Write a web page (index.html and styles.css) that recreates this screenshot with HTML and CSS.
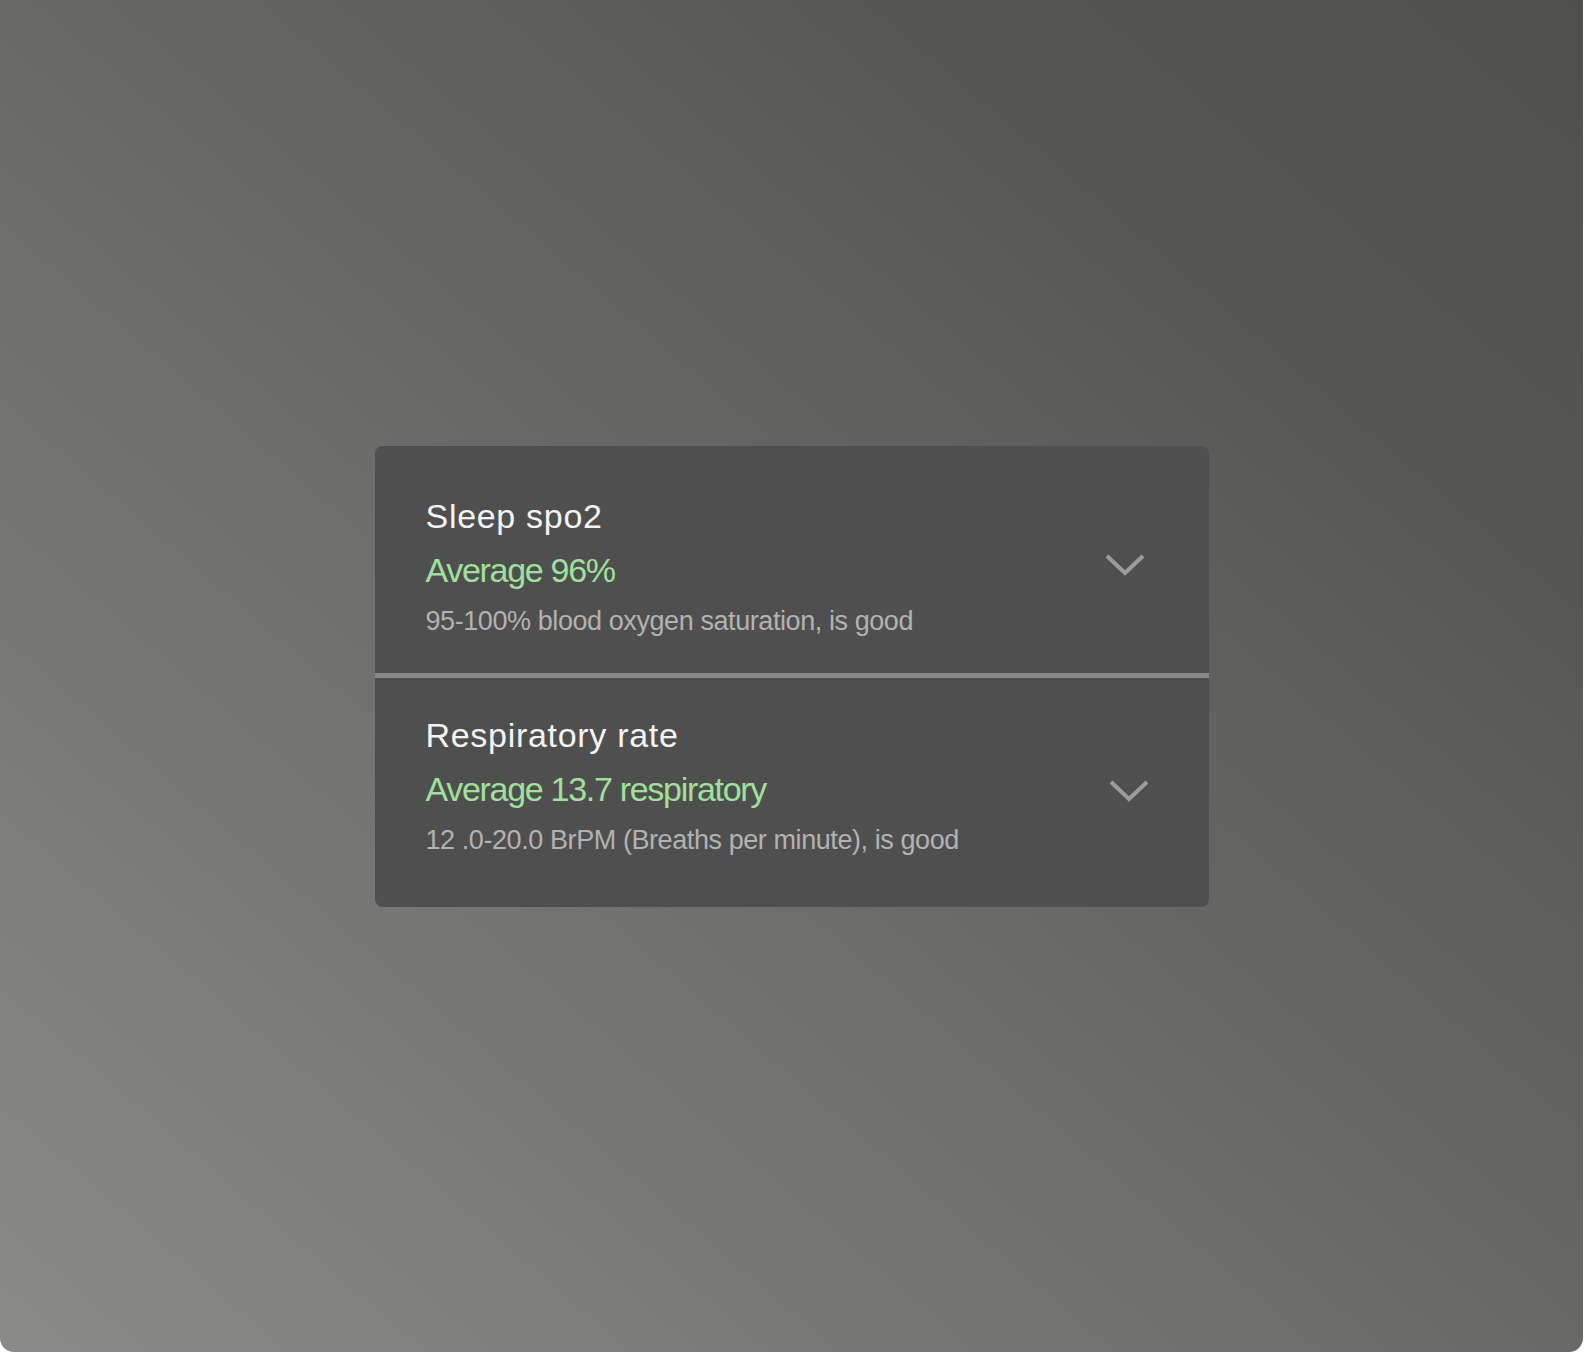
FILE: index.html
```html
<!DOCTYPE html>
<html lang="en">
<head>
    <meta charset="utf-8">
    <title>Sleep stats</title>
    <link rel="stylesheet" href="styles.css">
</head>
<body>
    <div class="frame">
        <div class="stats-card">
            <div class="stat-row stat-row-first">
                <div class="stat-text">
                    <div class="stat-title">Sleep spo2</div>
                    <div class="stat-value">Average 96%</div>
                    <div class="stat-note">95-100% blood oxygen saturation, is good</div>
                </div>
                <svg class="chevron" width="40" height="22" viewBox="0 0 40 22">
                    <polyline points="2,2 20,19 38,2" fill="none" stroke="#9c9c9c" stroke-width="4"/>
                </svg>
            </div>
            <div class="stat-row stat-row-second">
                <div class="stat-text">
                    <div class="stat-title">Respiratory rate</div>
                    <div class="stat-value">Average 13.7 respiratory</div>
                    <div class="stat-note">12 .0-20.0 BrPM (Breaths per minute), is good</div>
                </div>
                <svg class="chevron" width="40" height="22" viewBox="0 0 40 22">
                    <polyline points="2,2 20,19 38,2" fill="none" stroke="#9c9c9c" stroke-width="4"/>
                </svg>
            </div>
        </div>
    </div>
</body>
</html>
```

FILE: styles.css
```css
body {
    margin: 0;
    background-color: #fff;
    font-family: "Liberation Sans", Arial, sans-serif;
}

.frame {
    width: 1583px;
    height: 1352px;
    border-radius: 0 0 14px 14px;
    background: linear-gradient(to top right, #8a8a89 0%, #6b6b6a 45%, #555553 80%, #4f4f4d 100%);
    display: flex;
    justify-content: center;
    align-items: center;
}

.stats-card {
    width: 834px;
    background-color: #4f4f4f;
    border-radius: 8px;
    overflow: hidden;
}

.stat-row {
    display: flex;
    align-items: center;
    justify-content: space-between;
    padding-left: 51px;
    padding-right: 64px;
}

.stat-row-first {
    padding-top: 50px;
    padding-bottom: 35px;
}

.stat-row-second {
    border-top: 5px solid #898989;
    padding-top: 37px;
    padding-bottom: 50px;
}

.stat-title {
    color: #f4f4f4;
    font-size: 34px;
    line-height: 40px;
    letter-spacing: 0.7px;
}

.stat-value {
    margin-top: 14px;
    color: #9fe09b;
    font-size: 34px;
    line-height: 40px;
    letter-spacing: -1.3px;
}

.stat-note {
    margin-top: 14px;
    color: #b2b2b2;
    font-size: 27px;
    line-height: 34px;
    letter-spacing: -0.42px;
}

.chevron {
    flex-shrink: 0;
}

.stat-row-first .chevron {
    margin-bottom: 4px;
}

.stat-row-second .chevron {
    margin: 10px -4px 0 0;
}
```
